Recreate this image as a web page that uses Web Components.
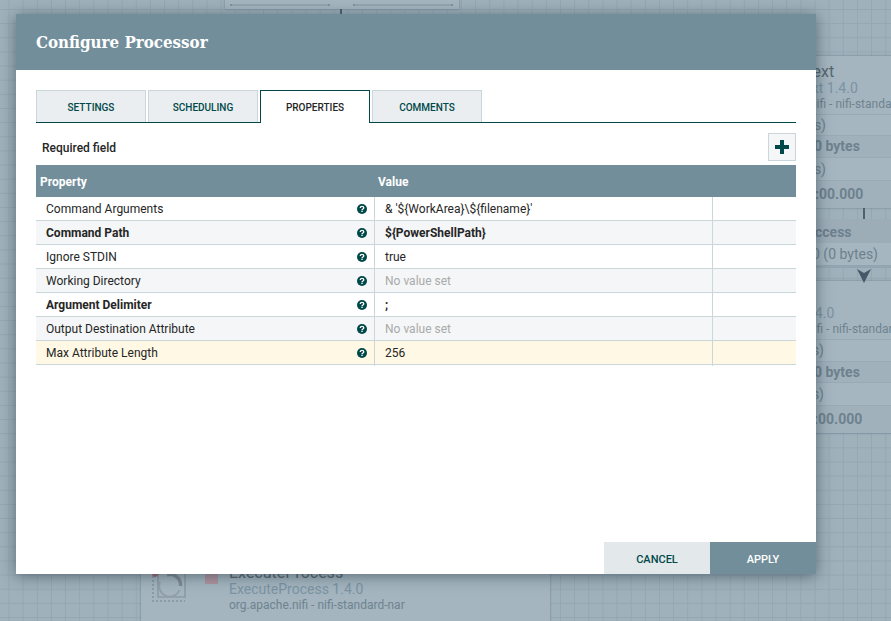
<!DOCTYPE html>
<html>
<head>
<meta charset="utf-8">
<title>Configure Processor</title>
<style>
html, body { margin: 0; height: 100%; overflow: hidden; }
body { font-family: Roboto, "Liberation Sans", sans-serif; }
</style>
</head>
<body>
<nf-canvas>
    <nf-node style="left:141px;top:557px;width:409px;height:80px" text-left="88">
        <span slot="name">ExecuteProcess</span>
        <span slot="version">ExecuteProcess 1.4.0</span>
        <span slot="bundle">org.apache.nifi - nifi-standard-nar</span>
    </nf-node>
    <nf-node style="left:659px;top:56px;width:300px;height:152px" text-left="88">
        <span slot="name">ReplaceText</span>
        <span slot="version">ReplaceText 1.4.0</span>
        <span slot="bundle">org.apache.nifi - nifi-standard-nar</span>
        <nf-stat indent="101" h="21">0 (0 bytes)</nf-stat>
        <nf-stat indent="97" h="22" bold>0 bytes / 0 bytes</nf-stat>
        <nf-stat indent="101" h="23">0 (0 bytes)</nf-stat>
        <nf-stat indent="120" h="28" bold>00:00:00.000</nf-stat>
    </nf-node>
    <nf-node style="left:656px;top:281px;width:304px;height:152px" text-left="88">
        <span slot="name">PutEmail</span>
        <span slot="version">PutEmail 1.4.0</span>
        <span slot="bundle">org.apache.nifi - nifi-standard-nar</span>
        <nf-stat indent="102" h="22">0 (0 bytes)</nf-stat>
        <nf-stat indent="100" h="21" bold>0 bytes / 0 bytes</nf-stat>
        <nf-stat indent="102" h="23">0 (0 bytes)</nf-stat>
        <nf-stat indent="122" h="28" bold>00:00:00.000</nf-stat>
    </nf-node>
</nf-canvas>
<nf-dialog heading="Configure Processor">
    <nf-tabs></nf-tabs>
    <nf-properties></nf-properties>
</nf-dialog>

<script>
class NfCanvas extends HTMLElement {
    constructor() {
        super();
        this.attachShadow({ mode: 'open' });
    }

    connectedCallback() {
        this.shadowRoot.innerHTML = `
            <style>
            :host {
                display: block;
                position: absolute;
                inset: 0;
                overflow: hidden;
                background-color: #9fb1bb;
                background-image:
                    linear-gradient(90deg, #94a7b2 1px, transparent 1px),
                    linear-gradient(#94a7b2 1px, transparent 1px);
                background-size: 14.15px 14.15px;
                background-position: 8.5px 9px;
            }
            .top-node {
                position: absolute;
                left: 225px;
                top: -20px;
                width: 234px;
                height: 29px;
                background: #a5b6c0;
                box-shadow: 0 0 2px rgba(60,80,95,.5);
            }
            .top-node i {
                position: absolute;
                top: 24px;
                height: 2px;
                background: #93a5b0;
                border-left: 2px solid #7f929e;
                border-right: 2px solid #7f929e;
            }
            .link {
                position: absolute;
                background: #4d626f;
            }
            .conn {
                position: absolute;
                left: 780px;
                top: 219px;
                width: 111px;
                font-size: 14px;
                color: #6e818d;
            }
            .conn .label {
                height: 24px;
                line-height: 26px;
                font-weight: 700;
                background: #9cadb8;
                padding-left: 20px;
            }
            .conn .queue {
                height: 22px;
                line-height: 22px;
                background: #a5b6c0;
                border-bottom: 3px solid #93a5b0;
                padding-left: 32px;
            }
            .arrow {
                position: absolute;
                left: 857px;
                top: 268px;
            }
            .stamp {
                position: absolute;
                left: 152px;
                top: 566px;
            }
            .run {
                position: absolute;
                left: 205px;
                top: 566px;
                width: 13px;
                height: 18px;
                background: #b0949e;
            }
            </style>
            <slot></slot>
            <div class="top-node">
                <i style="left:5px;width:96px"></i>
                <i style="left:128px;width:96px"></i>
            </div>
            <div class="link" style="left:340px;top:9px;width:2px;height:6px"></div>
            <div class="link" style="left:863px;top:208px;width:2px;height:12px"></div>
            <div class="conn">
                <div class="label">success</div>
                <div class="queue">0 (0 bytes)</div>
            </div>
            <svg class="arrow" width="14" height="15" viewBox="0 0 14 15">
                <path d="M0 1 L7 5 L14 1 L7 15 Z" fill="#46596a"/>
            </svg>
            <svg class="stamp" width="36" height="38" viewBox="0 0 36 38" fill="none">
                <path d="M6 6 V31 H33 V6" stroke="#8d9aa3" stroke-width="1.6"/>
                <path d="M1 6 V35 H33" stroke="#8d9aa3" stroke-width="2" stroke-dasharray="2 2"/>
                <path d="M15 8.9 A10.5 10.5 0 0 1 28.5 20" stroke="#7f8b93" stroke-width="3.4"/>
                <path d="M27.5 24 A10.5 10.5 0 0 1 8 16" stroke="#929fa8" stroke-width="1.8"/>
                <path d="M-1 8 L3 5 L7 8 L3 11.5 Z" fill="#a06873"/>
            </svg>
            <div class="run"></div>
        `;
    }
}

class NfNode extends HTMLElement {
    constructor() {
        super();
        this.attachShadow({ mode: 'open' });
    }

    connectedCallback() {
        const left = this.getAttribute('text-left') || 88;
        this.shadowRoot.innerHTML = `
            <style>
            :host {
                display: block;
                position: absolute;
                background: #a4b5bf;
                box-shadow: 0 0 2px rgba(60,80,95,.5);
                color: #6e818d;
            }
            .head {
                display: flex;
                flex-direction: column;
                height: 58px;
                padding-left: ${left}px;
                box-sizing: border-box;
                padding-top: 8px;
                white-space: nowrap;
            }
            .name { font-size: 16px; line-height: 16px; color: #56666f; }
            .version { font-size: 14px; line-height: 16px; color: #7b93a2; }
            .bundle { font-size: 12px; line-height: 16px; color: #6f838f; }
            </style>
            <div class="head">
                <div class="name"><slot name="name"></slot></div>
                <div class="version"><slot name="version"></slot></div>
                <div class="bundle"><slot name="bundle"></slot></div>
            </div>
            <slot></slot>
        `;
    }
}

class NfStat extends HTMLElement {
    constructor() {
        super();
        this.attachShadow({ mode: 'open' });
    }

    connectedCallback() {
        const bold = this.hasAttribute('bold');
        const h = this.getAttribute('h') || 22;
        this.shadowRoot.innerHTML = `
            <style>
            :host {
                display: block;
                box-sizing: border-box;
                height: ${h}px;
                line-height: ${h - 1}px;
                padding-left: ${this.getAttribute('indent') || 0}px;
                font-size: 14px;
                font-weight: ${bold ? 700 : 400};
                white-space: nowrap;
                background: ${bold ? '#a0b1bc' : '#a5b6c0'};
                border-top: 1px solid #98aab5;
            }
            </style>
            <slot></slot>
        `;
    }
}

class NfDialog extends HTMLElement {
    constructor() {
        super();
        this.attachShadow({ mode: 'open' });
    }

    connectedCallback() {
        this.shadowRoot.innerHTML = `
            <style>
            :host {
                display: flex;
                flex-direction: column;
                position: absolute;
                left: 16px;
                top: 14px;
                width: 800px;
                height: 560px;
                background: #fff;
                box-shadow: 0 2px 14px rgba(30,50,60,.55);
            }
            header {
                flex: none;
                height: 56px;
                line-height: 57px;
                padding-left: 20px;
                background: #728e9b;
                color: #fff;
                font-family: "DejaVu Serif Condensed", "DejaVu Serif", serif;
                font-stretch: condensed;
                font-weight: 700;
                font-size: 16.8px;
            }
            .body {
                flex: 1;
                padding: 20px 20px 0;
                min-height: 0;
            }
            footer {
                flex: none;
                display: flex;
                justify-content: flex-end;
                height: 32px;
            }
            button {
                width: 106px;
                border: 0;
                padding: 2px 0 0;
                font: 500 11px Roboto, sans-serif;
                text-transform: uppercase;
            }
            .cancel { background: #e3e8eb; color: #004849; }
            .apply { background: #728e9b; color: #fff; }
            </style>
            <header>${this.getAttribute('heading')}</header>
            <div class="body"><slot></slot></div>
            <footer>
                <button class="cancel">Cancel</button>
                <button class="apply">Apply</button>
            </footer>
        `;
    }
}

class NfTabs extends HTMLElement {
    constructor() {
        super();
        this.attachShadow({ mode: 'open' });
    }

    connectedCallback() {
        this.shadowRoot.innerHTML = `
            <style>
            :host {
                display: flex;
                align-items: flex-start;
                gap: 2px;
                height: 33px;
                box-sizing: border-box;
                border-bottom: 1px solid #004849;
            }
            div {
                box-sizing: border-box;
                width: 110px;
                height: 32px;
                line-height: 33px;
                text-align: center;
                font-size: 10px;
                font-weight: 500;
                text-transform: uppercase;
                color: #004849;
                background: #eaeef0;
                border: 1px solid #cbd6db;
                border-bottom: 0;
            }
            .on {
                height: 33px;
                background: #fff;
                color: #262626;
                border-color: #004849;
            }
            </style>
            <div>Settings</div>
            <div>Scheduling</div>
            <div class="on">Properties</div>
            <div>Comments</div>
        `;
    }
}

class NfHelp extends HTMLElement {
    constructor() {
        super();
        this.attachShadow({ mode: 'open' });
    }

    connectedCallback() {
        this.shadowRoot.innerHTML = `
            <style>
            :host { display: block; width: 10px; height: 10px; margin-bottom: 1px; }
            svg { display: block; }
            </style>
            <svg width="10" height="10" viewBox="0 0 10 10">
                <circle cx="5" cy="5" r="5" fill="#004849"/>
                <path d="M3.3 3.9 C3.3 2.9 4.1 2.4 5 2.4 C6 2.4 6.8 3 6.8 3.8 C6.8 5 5.1 4.9 5.1 6" fill="none" stroke="#fff" stroke-width="1.3"/>
                <rect x="4.3" y="6.6" width="1.5" height="1.3" fill="#fff"/>
            </svg>
        `;
    }
}

class NfProperties extends HTMLElement {
    constructor() {
        super();
        this.attachShadow({ mode: 'open' });
    }

    connectedCallback() {
        const rows = [
            ['Command Arguments', "& '${WorkArea}\\${filename}'", ''],
            ['Command Path', '${PowerShellPath}', 'req'],
            ['Ignore STDIN', 'true', ''],
            ['Working Directory', 'No value set', 'none'],
            ['Argument Delimiter', ';', 'req'],
            ['Output Destination Attribute', 'No value set', 'none'],
            ['Max Attribute Length', '256', 'sel']
        ];
        const html = rows.map(([name, value, kind], i) => `
            <div class="row ${i % 2 ? 'odd' : ''} ${kind}">
                <div class="name"><span>${name}</span><nf-help></nf-help></div>
                <div class="value"><span>${value}</span></div>
                <div class="extra"></div>
            </div>`).join('');
        this.shadowRoot.innerHTML = `
            <style>
            :host {
                display: block;
                font-size: 12px;
                color: #262626;
            }
            .bar {
                display: flex;
                align-items: center;
                justify-content: space-between;
                height: 42px;
                padding: 10px 0 4px 6px;
                box-sizing: border-box;
                font-weight: 500;
            }
            .bar span { padding-top: 2px; }
            .add {
                box-sizing: border-box;
                width: 28px;
                height: 28px;
                display: flex;
                align-items: center;
                justify-content: center;
                background: #f4f6f7;
                border: 1px solid #cbd6db;
            }
            .thead, .row {
                display: grid;
                grid-template-columns: 338px 338px 84px;
            }
            .thead {
                height: 32px;
                line-height: 34px;
                background: #728e9b;
                color: #fff;
                font-weight: 700;
            }
            .thead div { padding-left: 4px; }
            .row {
                height: 24px;
                box-sizing: border-box;
                line-height: 25px;
                border-bottom: 1px solid #cbd6db;
            }
            .row.odd { background: #f4f6f7; }
            .row.sel { background: #fff8e4; }
            .name {
                display: flex;
                align-items: center;
                justify-content: space-between;
                padding: 0 7px 0 10px;
            }
            .value {
                padding-left: 10px;
                border-left: 1px solid #cbd6db;
            }
            .extra { border-left: 1px solid #cbd6db; }
            .req span { font-weight: 700; }
            .none .value span { color: #aaaaaa; }
            </style>
            <div class="bar">
                <span>Required field</span>
                <div class="add">
                    <svg width="14" height="14" viewBox="0 0 14 14"><path d="M5 0h4v5h5v4H9v5H5V9H0V5h5z" fill="#004849"/></svg>
                </div>
            </div>
            <div class="thead"><div>Property</div><div>Value</div><div></div></div>
            ${html}
        `;
    }
}

customElements.define('nf-canvas', NfCanvas);
customElements.define('nf-node', NfNode);
customElements.define('nf-stat', NfStat);
customElements.define('nf-dialog', NfDialog);
customElements.define('nf-tabs', NfTabs);
customElements.define('nf-help', NfHelp);
customElements.define('nf-properties', NfProperties);
</script>
</body>
</html>
